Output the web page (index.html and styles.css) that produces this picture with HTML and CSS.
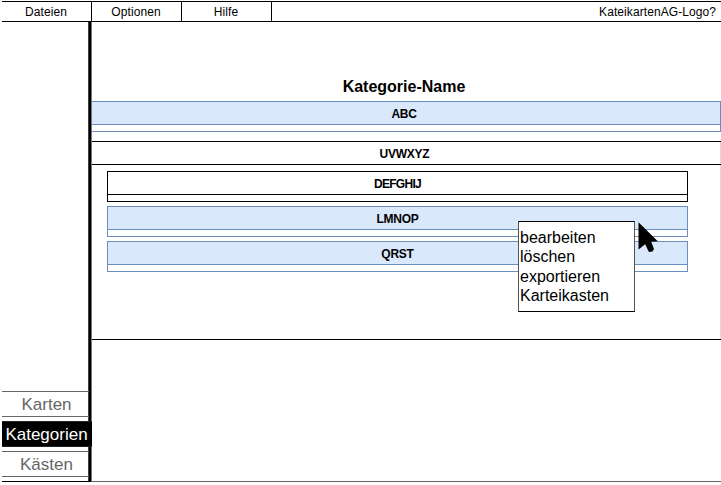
FILE: index.html
```html
<!DOCTYPE html>
<html lang="de">
<head>
<meta charset="utf-8">
<title>Kategorien</title>
<link rel="stylesheet" href="styles.css">
</head>
<body>
<div class="app">
  <header class="menubar">
    <nav class="menus">
      <span class="menu">Dateien</span>
      <span class="menu">Optionen</span>
      <span class="menu">Hilfe</span>
    </nav>
    <span class="logo">KateikartenAG-Logo?</span>
  </header>
  <div class="body">
    <aside class="sidebar">
      <div class="tab">Karten</div>
      <div class="tab active">Kategorien</div>
      <div class="tab">Kästen</div>
    </aside>
    <main class="content">
      <h1>Kategorie-Name</h1>
      <section class="card blue wide"><h2>ABC</h2></section>
      <section class="group">
        <h2>UVWXYZ</h2>
        <div class="children">
          <div class="card"><h2 class="tight">DEFGHIJ</h2></div>
          <div class="card blue"><h2>LMNOP</h2></div>
          <div class="card blue"><h2>QRST</h2></div>
        </div>
      </section>
    </main>
  </div>
  <ul class="context">
    <li>bearbeiten</li>
    <li>löschen</li>
    <li>exportieren</li>
    <li>Karteikasten</li>
  </ul>
  <svg class="pointer" width="22" height="34" viewBox="0 0 22 34"><path d="M.5.3 19.8 19.3 13.2 19.8 16 27 14.5 29.5 11.3 30 10.3 29 7.2 22.3.5 27.5Z"/></svg>
</div>
</body>
</html>
```
FILE: styles.css
```css
* { box-sizing: border-box; }
body { margin: 0; background: #fff; color: #000; font-family: "Liberation Sans", Arial, sans-serif; }
.app { position: relative; width: 721px; height: 485px; padding: 1px 0 3px 2px; overflow: hidden; }
.menubar { display: flex; justify-content: space-between; height: 21px; border: solid #000; border-width: 1px 0; font-size: 12px; line-height: 20px; letter-spacing: .08px; }
.menus { display: flex; }
.menu { width: 90px; border-right: 1px solid #000; padding-right: 1px; text-align: center; }
.logo { padding-right: 5px; }
.body { display: flex; height: 460px; }
.sidebar {
  display: flex; flex: none; flex-direction: column; justify-content: flex-end; gap: 4px;
  width: 90px; padding-bottom: 4px; border-bottom: 1px solid #000;
  background: linear-gradient(90deg, #404040 1px, #000 1px 3px, #777 3px) right / 4px 100% no-repeat;
}
.tab { height: 26px; width: 87px; border: solid #666; border-width: 1px 0; color: #666; font-size: 17px; line-height: 26px; text-align: center; padding-left: 2px; }
.tab.active { width: 90px; padding: 0 1px 0 0; background: #000; border-color: #222; color: #fff; }
.content { flex: 1; min-width: 0; margin-left: -1px; padding-left: 1px; border-bottom: 1px solid #666; }
h1 { margin: 0; padding: 55px 5px 0 0; height: 79px; font-size: 16px; line-height: 19px; text-align: center; }
h2 { margin: 0; height: 23px; font-size: 12px; line-height: 24px; letter-spacing: -.25px; text-align: center; border-bottom: 1px solid #000; }
.tight { letter-spacing: -.7px; }
.card { height: 31px; border: 1px solid #000; }
.blue, .blue h2 { border-color: #6c8ebf; }
.blue h2 { background: #dae8fc; }
.wide { border-left: 0; }
.wide h2, .group > h2 { padding-right: 4px; }
.group { height: 199px; margin-top: 9px; border: solid #000; border-width: 1px 0; background: linear-gradient(#ddd, #ddd) right / 1px 100% no-repeat; }
.children { display: flex; flex-direction: column; gap: 4px; padding: 6px 33px 0 15px; }
.context { position: absolute; left: 518px; top: 221px; width: 117px; height: 91px; margin: 0; padding: 6px 0 0 1px; list-style: none; border: 1px solid #000; border-color: #000 #555; background: #fff; font-size: 16px; line-height: 19.3px; }
.pointer { position: absolute; left: 638px; top: 222px; }
```
